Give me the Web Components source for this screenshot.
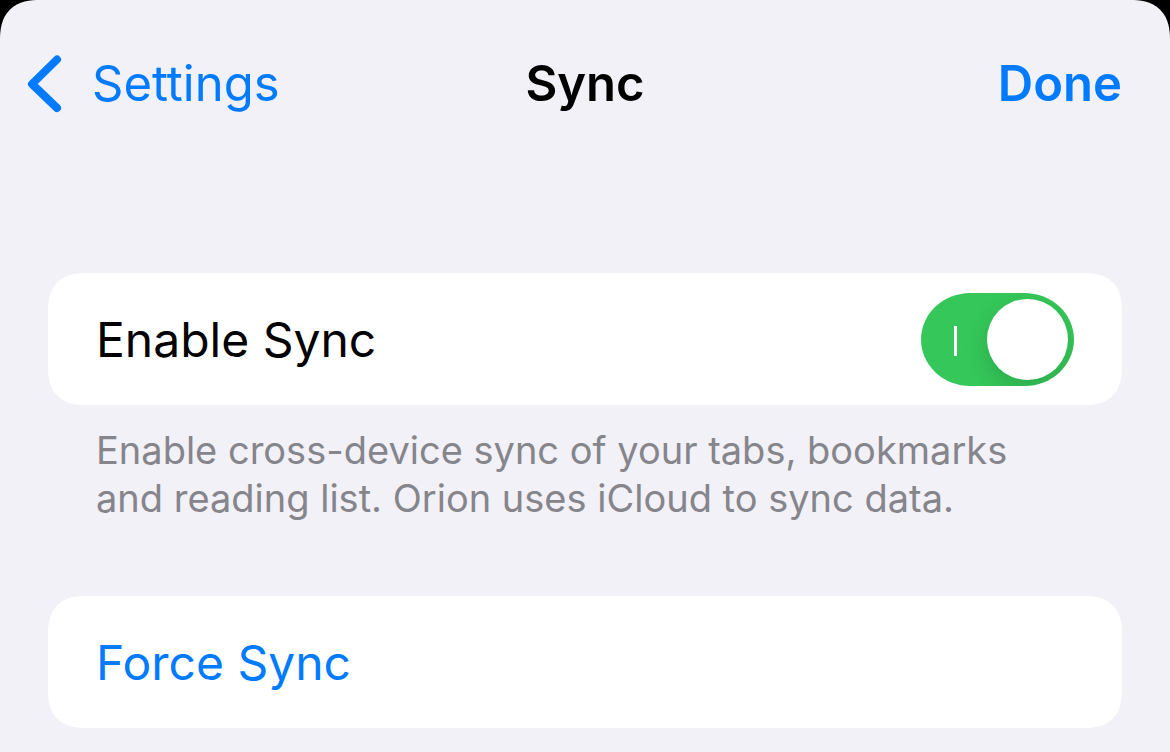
<!DOCTYPE html>
<html lang="en">
<head>
<meta charset="utf-8">
<meta name="viewport" content="width=device-width, initial-scale=1">
<title>Sync</title>
<style>
  html { background: #000; }
  body { margin: 0; min-height: 100vh; display: flex; font-family: Inter, "Liberation Sans", sans-serif; color: #000; }
</style>
</head>
<body>
<settings-sheet>
  <nav-bar slot="bar" heading="Sync" back="Settings" action="Done"></nav-bar>
  <settings-group>
    <toggle-row checked>Enable Sync</toggle-row>
    <span slot="note">Enable cross-device sync of your tabs, bookmarks and reading list. Orion uses iCloud to sync data.</span>
  </settings-group>
  <settings-group>
    <action-row>Force Sync</action-row>
  </settings-group>
</settings-sheet>
<script>
  class BaseElement extends HTMLElement {
    connectedCallback() {
      if (!this.shadowRoot) this.attachShadow({ mode: "open" }).innerHTML = this.render();
    }
  }

  customElements.define("settings-sheet", class extends BaseElement {
    render() {
      return `<style>
        :host { flex: 1; min-width: 0; background: #f2f1f8; border-radius: 32px 32px 0 0; }
        @supports (corner-shape: superellipse(1.3)) {
          :host { border-radius: 40px 40px 0 0; corner-shape: superellipse(1.3); }
        }
        main { display: flex; flex-direction: column; gap: 74px; padding: 105px 48px 24px; }
      </style>
      <slot name="bar"></slot>
      <main><slot></slot></main>`;
    }
  });

  customElements.define("nav-bar", class extends BaseElement {
    render() {
      return `<style>
        :host { display: block; }
        header { display: grid; grid-template-columns: 1fr auto 1fr; align-items: center; height: 168px; padding: 0 48px 0 24px; }
        a, button { font: inherit; font-size: 49px; line-height: 60px; color: #007aff; text-decoration: none; }
        a { justify-self: start; display: flex; align-items: center; gap: 28px; }
        svg { width: 40px; height: 60px; }
        h1 { margin: 0 0 0 24px; font-size: 49px; line-height: 60px; font-weight: 600; }
        button { justify-self: end; padding: 0; border: 0; background: none; font-weight: 600; cursor: pointer; }
      </style>
      <header>
        <a href="#settings"><svg viewBox="0 0 40 60" aria-hidden="true"><path d="M33 5.500 L8 30 L33 54" fill="none" stroke="#007aff" stroke-width="8" stroke-linecap="round" stroke-linejoin="round"/></svg><span>${this.getAttribute("back")}</span></a>
        <h1>${this.getAttribute("heading")}</h1>
        <button type="button">${this.getAttribute("action")}</button>
      </header>`;
    }
  });

  customElements.define("settings-group", class extends BaseElement {
    render() {
      return `<style>
        :host { display: block; }
        .card { background: #fff; border-radius: 32px; overflow: hidden; }
        @supports (corner-shape: superellipse(1.3)) {
          .card { border-radius: 38px; corner-shape: superellipse(1.3); }
        }
        ::slotted([slot="note"]) { display: block; margin: 21px 48px 0; font-size: 38px; line-height: 48px; color: #85858b; }
      </style>
      <section><div class="card"><slot></slot></div><slot name="note"></slot></section>`;
    }
  });

  customElements.define("toggle-row", class extends BaseElement {
    render() {
      return `<style>
        :host { display: block; }
        label { display: flex; align-items: center; justify-content: space-between; min-height: 132px; padding: 0 48px; font-size: 48px; line-height: 60px; cursor: pointer; }
        span { padding-top: 2px; }
        input { appearance: none; flex: none; display: flex; align-items: center; justify-content: space-between; box-sizing: border-box; width: 153px; height: 93px; margin: 0; padding: 0 6px 0 33px; border-radius: 50px / 47px; background: #e9e9eb; overflow: hidden; cursor: pointer; }
        input::before { content: ""; width: 3px; height: 30px; margin-top: 3px; background: #fff; }
        input::after { content: ""; width: 81px; height: 81px; border-radius: 50%; background: #fff; box-shadow: 0 9px 24px rgba(0, 0, 0, .15); }
        input:checked { background: #35c759; }
        input:not(:checked) { flex-direction: row-reverse; padding: 0 33px 0 6px; }
      </style>
      <label><span><slot></slot></span><input type="checkbox" role="switch" aria-label="Enable Sync" ${this.hasAttribute("checked") ? "checked" : ""}></label>`;
    }
  });

  customElements.define("action-row", class extends BaseElement {
    render() {
      return `<style>
        :host { display: block; }
        button { display: block; width: 100%; min-height: 132px; padding: 2px 48px 0; border: 0; background: none; font: inherit; font-size: 48px; line-height: 60px; text-align: left; color: #007aff; cursor: pointer; }
      </style>
      <button type="button"><slot></slot></button>`;
    }
  });
</script>
</body>
</html>
